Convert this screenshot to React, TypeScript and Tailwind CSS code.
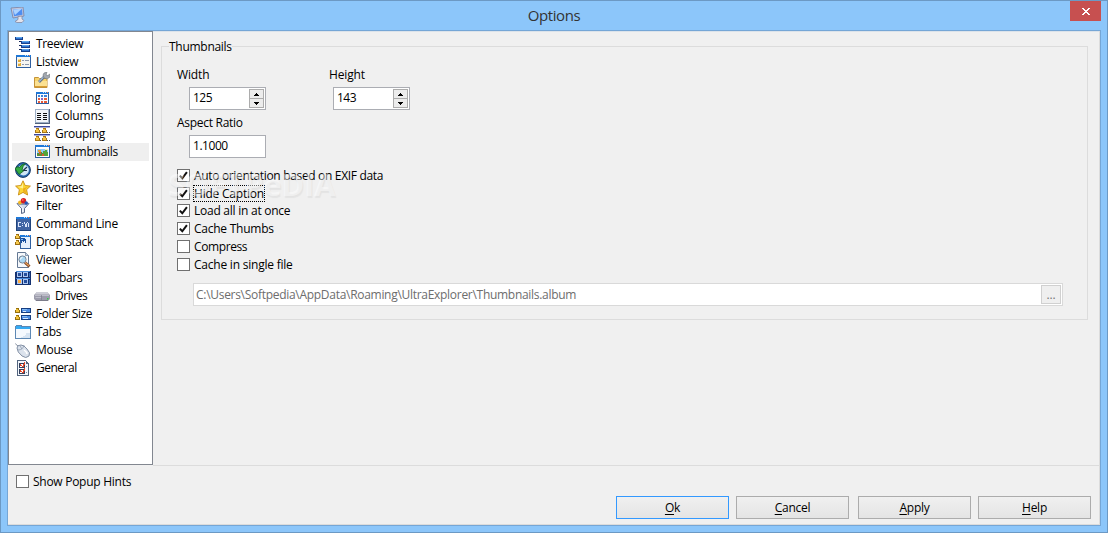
import type { ReactNode } from "react"
import clsx from "clsx"

interface TreeItem {
  label: string
  icon: ReactNode
  nested?: boolean
  selected?: boolean
  spacing?: string
}

function Icon({ children, smooth }: { children: ReactNode; smooth?: boolean }) {
  return (
    <svg
      width="16"
      height="16"
      viewBox="0 0 16 16"
      className="shrink-0"
      shapeRendering={smooth ? "auto" : "crispEdges"}
    >
      {children}
    </svg>
  )
}

function WindowFrame({ x = 1, y = 1, w = 15, h = 13, fill = "#fbfcff" }) {
  return (
    <>
      <rect x={x} y={y} width={w} height={h} fill="#2f5f9f" />
      <rect x={x + 1} y={y + 2} width={w - 2} height={h - 3} fill={fill} />
      <rect x={x} y={y} width={w} height="2" fill="#1e78d8" />
      <rect x={x + w - 6} y={y} width="1" height="1" fill="#bfe0ff" />
      <rect x={x + w - 4} y={y} width="1" height="1" fill="#bfe0ff" />
      <rect x={x + w - 2} y={y} width="1" height="1" fill="#ff7a3c" />
    </>
  )
}

const treeviewIcon = (
  <Icon>
    <path d="M3 3h1v11h3v-1H4v-3h3V9H4V6h3V5H4z" fill="#16285c" />
    <path d="M0 1h8v3H0zM6 5h9v3H6zM6 9h9v3H6zM6 13h9v3H6z" fill="#17408c" />
    <path d="M1 1h6v1H1zM7 5h7v1H7zM7 9h7v1H7zM7 13h7v1H7z" fill="#5aa4ee" />
    <path d="M1 2h6v1H1zM7 6h7v1H7zM7 10h7v1H7zM7 14h7v1H7z" fill="#2f75cf" />
  </Icon>
)

const listviewIcon = (
  <Icon>
    <WindowFrame fill="#f5f5f2" />
    <path d="M3 5h3v3H3zM3 9h3v3H3z" fill="#e0aa3a" />
    <path d="M3 5h2v1H3zM3 9h2v1H3z" fill="#ffe294" />
    <path d="M7 6h2v1H7zM10 6h4v1h-4zM7 10h2v1H7zM10 10h4v1h-4z" fill="#8c98ac" />
  </Icon>
)

const commonIcon = (
  <Icon smooth>
    <path d="M.5 5.500h4l1 1h7.500v9H.5z" fill="#f7d36b" stroke="#c4933a" />
    <path d="M1 9h12v6H1z" fill="#fbe193" />
    <path d="M1 14.500h12" stroke="#d99c33" />
    <path d="M5 10l6-6" stroke="#5f7086" strokeWidth="2.600" />
    <path d="M5 9.600l6-6" stroke="#a4bdd8" strokeWidth="1.200" />
    <path d="M10 1l3-.9-1 2.500 1.800 1 2-1.600v3.200L13 7l-3-1-1-3z" fill="#a4a9b0" stroke="#6d737b" strokeWidth=".6" />
  </Icon>
)

const coloringIcon = (
  <Icon>
    <WindowFrame x={2} y={2} w={13} h={12} />
    <path d="M4 5h2v2H4zM7 5h2v2H7zM10 5h3v2h-3z" fill="#3d82d8" />
    <path d="M4 8h2v2H4zM10 8h3v2h-3z" fill="#e55b38" />
    <path d="M7 8h2v2H7z" fill="#8b62be" />
    <path d="M4 11h2v2H4zM7 11h2v2H7zM10 11h3v2h-3z" fill="#e55b38" />
  </Icon>
)

const columnsIcon = (
  <Icon>
    <rect x="1" y="1" width="15" height="15" fill="#4f617c" />
    <rect x="1" y="1" width="14" height="14" fill="#9fb0c6" />
    <rect x="2" y="2" width="12" height="12" fill="#f4f7fa" />
    <path d="M3 5h4v1H3zM3 7h4v1H3zM3 9h4v1H3zM3 11h4v1H3zM9 5h4v1H9zM9 7h4v1H9zM9 9h4v1H9zM9 11h4v1H9z" fill="#101010" />
  </Icon>
)

const groupingIcon = (
  <Icon>
    <path d="M0 0h16v1H0zM0 8h16v1H0z" fill="#3b489a" />
    <path d="M0 1h16v1H0zM0 9h16v1H0z" fill="#aab0d8" />
    <path d="M2 2h3v2h1v3H1V4h1zM9 2h3v2h1v3H8V4h1zM2 10h3v2h1v3H1v-3h1zM9 10h3v2h1v3H8v-3h1z" fill="#a97814" />
    <path d="M2 3h2v1h1v2H2zM9 3h2v1h1v2H9zM2 11h2v1h1v2H2zM9 11h2v1h1v2H9z" fill="#f4c244" />
    <path d="M6 6h1v1H6zM13 6h1v1h-1zM15 6h1v1h-1zM6 14h1v1H6zM13 14h1v1h-1zM15 14h1v1h-1z" fill="#555" />
  </Icon>
)

const thumbnailsIcon = (
  <Icon>
    <WindowFrame />
    <rect x="3" y="5" width="11" height="7" fill="#8ccaf5" />
    <path d="M3 9h2V8h3v1h2v3H3z" fill="#5b8c35" />
    <path d="M4 6h3v2H4z" fill="#e8a234" />
    <path d="M9 7h2V6h2v2h1v4H9z" fill="#53a33b" />
    <path d="M5 8h2v2H5zM8 10h2v2H8z" fill="#d85a30" />
    <path d="M11 5h3v1h-3z" fill="#f8eeae" />
  </Icon>
)

const historyIcon = (
  <Icon smooth>
    <circle cx="8" cy="8" r="7.400" fill="#2869b0" stroke="#173a67" />
    <circle cx="8.500" cy="8" r="5.400" fill="#cfe6f6" />
    <path d="M8.200 8.500L12 5M8 8.500h4" stroke="#1c344c" strokeWidth="1.200" />
    <path d="M0 6.500l3.200-2 1 1.400Q6.500 2 10.500 1.600 7.500 4 7 8l1.500 1-4.500 3.500z" fill="#35ad42" stroke="#126021" strokeWidth=".8" />
  </Icon>
)

const favoritesIcon = (
  <Icon smooth>
    <path
      d="M8 .8l2.200 4.700 5.200.6-3.800 3.600 1 5.300L8 12.400 3.400 15l1-5.300L.6 6.100l5.200-.6z"
      fill="#fbd532"
      stroke="#c98c13"
      strokeWidth=".9"
    />
    <path d="M8 2.500L6.500 6.300l-4 .5L8 8.500z" fill="#fff09a" />
    <path d="M8 8.500l4.500-1.800-2.200 2.700 1 4L8 11.500z" fill="#edae20" />
  </Icon>
)

const filterIcon = (
  <Icon smooth>
    <path d="M2 5.500h12L9.500 10.500v4l-3 1v-5z" fill="#d4deed" stroke="#4a5878" strokeWidth=".9" />
    <path d="M5 7.500l2.800 2.800v3.800" stroke="#fff" fill="none" />
    <ellipse cx="8" cy="5.500" rx="5.800" ry="1.600" fill="#8b9ab5" />
    <circle cx="5" cy="4.500" r="1.900" fill="#f4b71f" />
    <circle cx="8.500" cy="2.800" r="2.700" fill="#d92121" />
    <circle cx="11.200" cy="5" r="1.700" fill="#2256b8" />
    <circle cx="7.800" cy="2" r=".8" fill="#ff8a7a" />
  </Icon>
)

const commandIcon = (
  <Icon>
    <rect x="1" y="1" width="15" height="14" fill="#20447c" />
    <rect x="1" y="1" width="15" height="2" fill="#1e78d8" />
    <rect x="2" y="3" width="13" height="11" fill="#4164a3" />
    <path d="M9 1h1v1H9zM11 1h1v1h-1z" fill="#bfe0ff" />
    <path d="M13 1h1v1h-1z" fill="#ff6b35" />
    <path d="M3 6h3v1H4v3h2v1H3zM7 7h1v1H7zM7 9h1v1H7zM9 6h1v2h1v3h-1V8H9zM12 6h1v1h1v4h-1V7h-1v4h-1V7h1z" fill="#dbe6fa" />
  </Icon>
)

const dropStackIcon = (
  <Icon>
    <WindowFrame x={5} y={1} w={11} h={14} fill="#e4effc" />
    <path d="M1 0h3v2h1v3H0V2h1zM1 6h3v2h1v3H0V8h1z" fill="#9a6e12" />
    <path d="M1 1h2v1h1v2H1zM1 7h2v1h1v2H1z" fill="#f6c84b" />
    <path d="M6 4h4v1h1v4h-1V7H9v1H8V7H7v2H6V7H5V5h1z" fill="#174f9e" />
    <path d="M6 5h2v1H6z" fill="#81bafa" />
  </Icon>
)

const viewerIcon = (
  <Icon smooth>
    <path d="M2.500.5h8l3 3v12h-11z" fill="#f6f9fd" stroke="#647893" />
    <path d="M10.500.5v3h3" fill="#c8d5e6" stroke="#647893" strokeWidth=".7" />
    <path d="M10 10.500l4.500 4" stroke="#7c4524" strokeWidth="3" />
    <path d="M10 10.200l4 3.600" stroke="#e69c57" strokeWidth="1.300" />
    <circle cx="7.500" cy="7.500" r="3.600" fill="#a8d7f4" stroke="#788697" />
    <path d="M5.500 7.500a2 2 0 0 1 2-2" stroke="#fff" fill="none" />
  </Icon>
)

const toolbarsIcon = (
  <Icon>
    <path d="M1 1h15v14H0V2h1z" fill="#143170" />
    <path d="M1 1h14v1H1zM1 8h14v1H1z" fill="#4689d9" />
    <path d="M2 2h5v5H2zM8 2h5v5H8zM2 9h5v5H2zM8 9h5v5H8z" fill="#afc8f0" />
    <path d="M3 3h3v3H3zM9 3h3v3H9zM9 10h3v3H9z" fill="#244e9d" />
    <path d="M3 10h3v3H3z" fill="#ffae42" />
    <path d="M14 3h1v4h-1zM14 10h1v4h-1z" fill="#386ebd" />
  </Icon>
)

const drivesIcon = (
  <Icon smooth>
    <path d="M3 4h10l3 3v4l-2 2H2l-2-2V7z" fill="#9c9cab" />
    <path d="M3 4h10l2 2.500H1z" fill="#cdcdd6" />
    <path d="M1 7.500h14M1.500 9.500h6" stroke="#bdbdc9" />
    <path d="M2 12.500h12" stroke="#7c7c8a" />
    <path d="M7.500 7v5" stroke="#777786" strokeWidth=".6" />
    <rect x="13" y="10" width="1.500" height="1.500" fill="#3bc94c" />
  </Icon>
)

const folderSizeIcon = (
  <Icon>
    <path d="M1 2h3v2h1v3H0V4h1zM1 9h3v2h1v3H0v-3h1z" fill="#94700e" />
    <path d="M1 3h2v1h1v2H1zM1 10h2v1h1v2H1z" fill="#f3c238" />
    <path d="M6 2h10v5H6zM6 9h10v5H6z" fill="#153d80" />
    <path d="M7 3h8v3H7zM7 10h8v3H7z" fill="#4d8ce0" />
    <path d="M7 3h5v1H7zM7 10h5v1H7z" fill="#83baf6" />
    <path d="M8 5h3v1H8zM8 12h5v1H8z" fill="#d5e8ff" />
  </Icon>
)

const tabsIcon = (
  <Icon>
    <path d="M1 1h6v1h9v13H0V2h1z" fill="#5d88b4" />
    <path d="M1 2h5v1h9v2H1z" fill="#35aaf3" />
    <path d="M1 5h14v9H1z" fill="#f5f9fe" />
    <path d="M11 9h4v5H6v-1h2v-1h2v-1h1z" fill="#d7e4f2" />
  </Icon>
)

const mouseIcon = (
  <Icon smooth>
    <path d="M.5 1.500q1 2.500 3.500 2.500" stroke="#8791a1" fill="none" />
    <path d="M2 6Q2 3 6 3q3 0 6 4 4 4 2 7-3 3-7 0-5-4-5-8z" fill="#dbe2ec" stroke="#8491a5" />
    <path d="M3 8q5 0 6-5M5 4l2 3" stroke="#94a1b4" fill="none" strokeWidth=".9" />
    <path d="M9 8q3 2 3 4" stroke="#fff" fill="none" strokeWidth="1.500" />
  </Icon>
)

const generalIcon = (
  <Icon>
    <path d="M2 0h9v1h1v1h1v1h1v13H2z" fill="#53657f" />
    <path d="M3 1h8v3h2v11H3z" fill="#f3f7fc" />
    <path d="M4 3h6v5H4zM4 9h6v5H4z" fill="#35415d" />
    <path d="M5 4h4v3H5zM5 10h4v3H5z" fill="#fff" />
    <path d="M5 4h1v1h1v1h1V4h1V2h1v3H9v2H7V6H5zM5 10h1v1h1v1h1v-2h1V8h1v3H9v2H7v-1H5z" fill="#e34726" />
    <path d="M11 6h1v1h-1zM11 12h1v1h-1z" fill="#7b899e" />
  </Icon>
)

const items: TreeItem[] = [
  { label: "Treeview", icon: treeviewIcon, spacing: "tracking-[-0.35px]" },
  { label: "Listview", icon: listviewIcon, spacing: "tracking-[-0.25px]" },
  { label: "Common", icon: commonIcon, nested: true },
  { label: "Coloring", icon: coloringIcon, nested: true },
  { label: "Columns", icon: columnsIcon, nested: true },
  { label: "Grouping", icon: groupingIcon, nested: true, spacing: "tracking-[-0.3px]" },
  { label: "Thumbnails", icon: thumbnailsIcon, nested: true, selected: true, spacing: "tracking-[-0.25px]" },
  { label: "History", icon: historyIcon, spacing: "tracking-[-0.25px]" },
  { label: "Favorites", icon: favoritesIcon, spacing: "tracking-[-0.35px]" },
  { label: "Filter", icon: filterIcon, spacing: "tracking-[-0.3px]" },
  { label: "Command Line", icon: commandIcon, spacing: "tracking-[-0.25px]" },
  { label: "Drop Stack", icon: dropStackIcon, spacing: "tracking-[-0.4px]" },
  { label: "Viewer", icon: viewerIcon, spacing: "tracking-[-0.4px]" },
  { label: "Toolbars", icon: toolbarsIcon, spacing: "tracking-[-0.3px]" },
  { label: "Drives", icon: drivesIcon, nested: true, spacing: "tracking-[-0.45px]" },
  { label: "Folder Size", icon: folderSizeIcon, spacing: "tracking-[-0.4px]" },
  { label: "Tabs", icon: tabsIcon, spacing: "tracking-[-0.3px]" },
  { label: "Mouse", icon: mouseIcon, spacing: "tracking-[-0.3px]" },
  { label: "General", icon: generalIcon, spacing: "tracking-[-0.5px]" },
]

function TreeRow({ label, icon, nested, selected, spacing }: TreeItem) {
  return (
    <div className={clsx("flex h-[18px] items-center", nested ? "pl-[22px]" : "pl-[3px]", selected && "bg-[#efefef]")}>
      {icon}
      <span className={clsx("ml-[5px]", spacing)}>{label}</span>
    </div>
  )
}

interface CheckBoxProps {
  label: string
  checked?: boolean
  focused?: boolean
  className?: string
}

function CheckBox({ label, checked, focused, className }: CheckBoxProps) {
  return (
    <label className={clsx("flex h-[13px] items-center", className)}>
      <span className="flex size-[13px] shrink-0 items-center justify-center border border-[#707070] bg-white">
        {checked && (
          <svg width="9" height="9" viewBox="0 0 9 9">
            <path d="M.8 4.600L3.300 7.300 7.900 1.200" fill="none" stroke="#111" strokeWidth="2" />
          </svg>
        )}
      </span>
      <span className={clsx("ml-[3px] border leading-[15px]", focused ? "border-dotted border-black" : "border-transparent")}>
        {label}
      </span>
    </label>
  )
}

function Arrow({ down }: { down?: boolean }) {
  return (
    <svg width="5" height="3" viewBox="0 0 5 3" shapeRendering="crispEdges" className={down ? "rotate-180" : ""}>
      <path d="M2 0h1v1h1v1h1v1H0V2h1V1h1z" fill="#000" />
    </svg>
  )
}

function SpinField({ value }: { value: string }) {
  return (
    <div className="flex h-[23px] w-[77px] justify-between border border-[#abadb3] bg-white p-px">
      <span className="pl-[2px] leading-[18px] tracking-[-0.5px]">{value}</span>
      <div className="flex w-[15px] flex-col">
        <div className="flex h-[10px] items-center justify-center border border-[#acacac] bg-[#ececec]">
          <Arrow />
        </div>
        <div className="flex h-[9px] items-center justify-center border border-t-0 border-[#acacac] bg-[#ececec]">
          <Arrow down />
        </div>
      </div>
    </div>
  )
}

function PushButton({ label, primary, className }: { label: string; primary?: boolean; className?: string }) {
  return (
    <button
      className={clsx(
        "h-[23px] w-[113px] border bg-gradient-to-b from-[#f0f0f0] to-[#e4e4e4] text-center leading-[21px] tracking-[-0.25px]",
        primary ? "border-[#3399ff]" : "border-[#acacac]",
        className,
      )}
    >
      <span className="underline underline-offset-2">{label[0]}</span>
      {label.slice(1)}
    </button>
  )
}

export default function App() {
  return (
    <div className="flex h-[533px] w-[1108px] flex-col overflow-hidden border border-[#6c99c4] bg-[#8cc6fa] px-[6px] pb-[6px] font-['Open_Sans','Noto_Sans',sans-serif] text-[12px] tracking-[-0.15px] text-black">
      <header className="relative flex h-[29px] shrink-0 justify-center">
        <div className="absolute top-[6px] left-[3px]">
          <Icon smooth>
            <path d="M1 1l12-1 1 9-11 2z" fill="#c3c8de" stroke="#7f88a8" strokeWidth=".9" />
            <path d="M3 2.500l9-.8.500 6-8.500 1.500z" fill="#4d8df1" />
            <path d="M3 2.500l9-.8L5 8z" fill="#aad2ff" />
            <path d="M8 9.500l4-.5v3l2 1.500-2 2H7l-2-1 3-2z" fill="#e2e3ed" stroke="#8689a1" strokeWidth=".8" />
          </Icon>
        </div>
        <h1 className="text-[15px] leading-[29px] tracking-[-0.4px] text-[#333]">Options</h1>
        <button className="absolute top-0 right-0 flex h-[20px] w-[31px] items-center justify-center bg-[#c75050]">
          <svg width="8" height="7" viewBox="0 0 8 7" shapeRendering="crispEdges">
            <path d="M0 0h2v1h1v1h2V1h1V0h2v1H7v1H6v1H5v1h1v1h1v1h1v1H6V6H5V5H3v1H2v1H0V6h1V5h1V4h1V3H2V2H1V1H0z" fill="#fff" />
          </svg>
        </button>
      </header>

      <div className="flex min-h-0 flex-1 flex-col border border-[#75a6d6] bg-[#f0f0f0] shadow-[inset_-1px_-1px_0_#dcdcdc,inset_0_1px_0_#dce3ea]">
        <div className="flex h-[434px] shrink-0">
          <nav className="h-[434px] w-[145px] border border-[#828790] bg-white px-[3px] pt-[3px]">
            {items.map((item) => (
              <TreeRow key={item.label} {...item} />
            ))}
          </nav>

          <main className="flex-1 pt-[15px] pl-2">
            <section className="h-[274px] w-[927px] border border-[#dcdcdc] pl-[15px]">
              <h2 className="-mt-[9px] -ml-2 h-[18px] w-fit bg-[#f0f0f0] leading-[18px] tracking-[-0.28px]">Thumbnails</h2>

              <div className="mt-[11px] flex">
                <div className="w-[152px]">
                  <div className="h-[20px] leading-[16px]">Width</div>
                  <div className="ml-3">
                    <SpinField value="125" />
                  </div>
                </div>
                <div>
                  <div className="h-[20px] leading-[16px]">Height</div>
                  <div className="ml-1">
                    <SpinField value="143" />
                  </div>
                </div>
              </div>

              <div className="mt-[5px] h-[20px] leading-[16px] tracking-[-0.28px]">Aspect Ratio</div>
              <div className="ml-3 h-[23px] w-[77px] border border-[#abadb3] bg-white pl-[3px] leading-[20px] tracking-[-0.45px]">
                1.1000
              </div>

              <div className="relative">
                <CheckBox className="mt-[11px] tracking-[-0.33px]" checked label="Auto orientation based on EXIF data" />
                <CheckBox className="mt-[5px] tracking-[-0.22px]" checked focused label="Hide Caption" />
                <CheckBox className="mt-[4px] tracking-[-0.25px]" checked label="Load all in at once" />
                <CheckBox className="mt-[5px] tracking-[-0.25px]" checked label="Cache Thumbs" />
                <CheckBox className="mt-[5px] tracking-[-0.4px]" label="Compress" />
                <CheckBox className="mt-[5px] tracking-[-0.22px]" label="Cache in single file" />
                <div className="pointer-events-none absolute top-[-2px] left-[-9px] text-[31px] leading-[34px] font-bold tracking-[-0.2px] text-white/45 [text-shadow:1px_2px_1px_rgba(0,0,0,0.05)]">
                  SOFTPeDIA
                </div>
              </div>

              <div className="mt-[12px] ml-4 flex h-[23px] w-[870px] justify-between border border-[#d9d9d9] bg-white p-px">
                <span className="pl-px leading-[19px] tracking-[-0.29px] text-[#6d6d6d]">
                  C:\Users\Softpedia\AppData\Roaming\UltraExplorer\Thumbnails.album
                </span>
                <button className="h-[19px] w-[20px] border border-[#d0d0d0] bg-[#efefef] text-center leading-[16px] text-[#777]">
                  ...
                </button>
              </div>
            </section>
          </main>
        </div>

        <footer className="min-h-0 flex-1">
          <div className="ml-[145px] h-px bg-[#dcdcdc]" />
          <CheckBox className="mt-[9px] ml-2 tracking-[-0.27px]" label="Show Popup Hints" />
          <div className="mt-2 mr-[9px] flex justify-end">
            <PushButton label="Ok" primary />
            <PushButton label="Cancel" className="ml-[7px]" />
            <PushButton label="Apply" className="ml-[9px]" />
            <PushButton label="Help" className="ml-[7px]" />
          </div>
        </footer>
      </div>
    </div>
  )
}
